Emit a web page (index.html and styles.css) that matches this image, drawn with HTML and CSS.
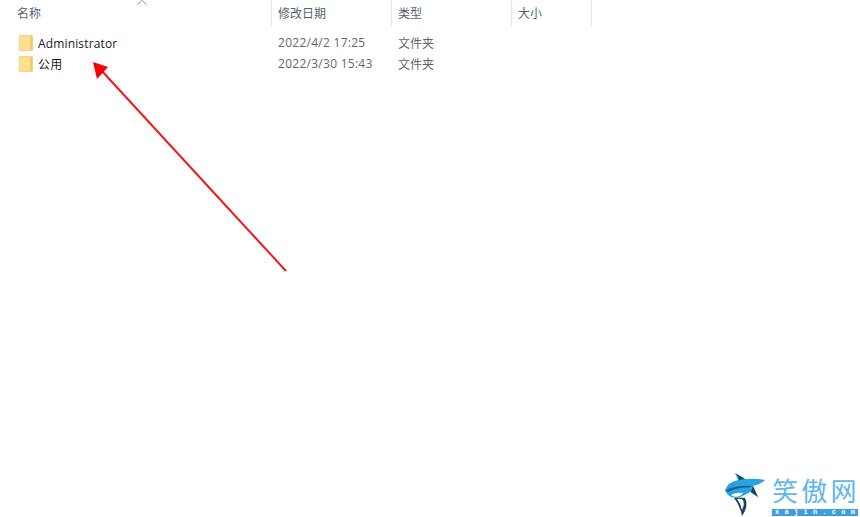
FILE: index.html
```html
<!DOCTYPE html>
<html lang="zh-CN">
<head>
  <meta charset="UTF-8" />
  <title>用户</title>
  <link rel="stylesheet" href="styles.css">
</head>
<body>
  <div class="explorer">
    <div class="header">
      <div class="col col-name">
        名称
        <svg class="sort" width="10" height="5" viewBox="0 0 10 5"><path d="M0.5 4.5 L5 0.5 L9.5 4.5" fill="none" stroke="#8a8f94" stroke-width="1"/></svg>
      </div>
      <div class="col col-date">修改日期</div>
      <div class="col col-type">类型</div>
      <div class="col col-size">大小</div>
    </div>

    <div class="row">
      <div class="cell-name">
        <svg class="folder" width="14" height="16" viewBox="0 0 14 16"><rect x="0.5" y="0.5" width="13" height="15" fill="#fce08e" stroke="#efd794"/><rect x="11" y="1" width="2.5" height="14" fill="#f2cc6e"/></svg>
        <span>Administrator</span>
      </div>
      <div class="cell-date">2022/4/2 17:25</div>
      <div class="cell-type">文件夹</div>
    </div>
    <div class="row">
      <div class="cell-name">
        <svg class="folder" width="14" height="16" viewBox="0 0 14 16"><rect x="0.5" y="0.5" width="13" height="15" fill="#fce08e" stroke="#efd794"/><rect x="11" y="1" width="2.5" height="14" fill="#f2cc6e"/></svg>
        <span>公用</span>
      </div>
      <div class="cell-date">2022/3/30 15:43</div>
      <div class="cell-type">文件夹</div>
    </div>
  </div>

  <!-- red annotation arrow -->
  <svg class="arrow" width="860" height="517" viewBox="0 0 860 517">
    <line x1="286" y1="271" x2="101" y2="70" stroke="#f01818" stroke-width="2"/>
    <polygon points="93,62 108,67 97,79" fill="#f80000"/>
  </svg>

  <!-- watermark -->
  <div class="mark">
    <svg class="shark" width="44" height="45" viewBox="0 0 44 45">
      <path d="M10 1 L20 7 Q31 6 40 8 Q36 12 28 14 L33 25 L25 20 Q20 23 15 25 Q7 27 3 23 Q0 20 0 18 Q3 10 13 8 Z" fill="#27a4e0"/>
      <path d="M10 1 L20 7 L14 8 Q14 4 10 1 Z" fill="#1c3f5c"/>
      <path d="M1 18 Q12 13 28 14 L24 15.5 Q12 15 3 20 Z" fill="#1c5f8a"/>
      <path d="M6 23 Q11 20 18 21 L15 24 Q9 26 6 23 Z" fill="#ffffff"/>
      <path d="M28 14 L33 25 L26 20 Z" fill="#1c3f5c"/>
      <path d="M9 26 Q15 25 20 26 Q24 34 17 44 Q15 33 9 26 Z" fill="#1c3f5c"/>
      <path d="M12 27 Q16 26 18 28 Q20 32 17 38 Q16 32 12 27 Z" fill="#ffffff"/>
    </svg>
    <div class="brand">
      <div class="brand-name">笑傲网</div>
      <div class="brand-url"><span>x</span><span>a</span><span>j</span><span>i</span><span>n</span><span>.</span><span>c</span><span>o</span><span>m</span></div>
    </div>
  </div>
</body>
</html>
```

FILE: styles.css
```css
html, body {
  margin: 0;
  padding: 0;
  height: 517px;
  overflow: hidden;
  background: white;
}
body {
  position: relative;
  font-family: "Noto Sans CJK SC", "Liberation Sans", sans-serif;
  font-size: 12px;
  color: #555;
}
.header {
  display: flex;
  height: 26px;
}
.col {
  box-sizing: border-box;
  padding: 4px 0 0 6px;
  border-right: 1px solid #e5e5e5;
  line-height: 17px;
  color: #56626e;
}
.col-name {
  position: relative;
  width: 272px;
  padding-left: 17px;
}
.col-date { width: 120px; }
.col-type { width: 120px; }
.col-size { width: 80px; }
.sort {
  position: absolute;
  left: 137px;
  top: 0;
}
.row {
  display: flex;
  align-items: center;
  height: 21px;
}
.header + .row { margin-top: 7px; }
.cell-name {
  display: flex;
  align-items: center;
  width: 272px;
  padding-left: 19px;
  padding-bottom: 1px;
  box-sizing: border-box;
  color: #1a1a1a;
  font-family: "Open Sans", "Noto Sans CJK SC", sans-serif;
  letter-spacing: 0.15px;
}
.folder { margin-right: 5px; }
.cell-date {
  width: 120px;
  padding-left: 6px;
  padding-bottom: 2px;
  box-sizing: border-box;
  font-family: "Open Sans", sans-serif;
  letter-spacing: 0.27px;
  color: #666;
}
.cell-type {
  padding-left: 6px;
  padding-bottom: 2px;
  color: #666;
}
.arrow {
  position: absolute;
  left: 0;
  top: 0;
}
.mark {
  position: absolute;
  left: 725px;
  top: 472px;
  display: flex;
}
.shark { margin-right: 3px; }
.brand { width: 86px; }
.brand-name {
  font-size: 26px;
  line-height: 36px;
  height: 36px;
  color: #62b6ec;
  letter-spacing: 3.3px;
  white-space: nowrap;
}
.brand-url {
  display: flex;
  justify-content: space-between;
  margin-top: 1px;
  padding: 0 3px;
  background: #3d9fe0;
  color: white;
  font-family: "Liberation Mono", monospace;
  font-size: 7px;
  font-weight: bold;
  line-height: 7px;
  height: 7px;
}
```
